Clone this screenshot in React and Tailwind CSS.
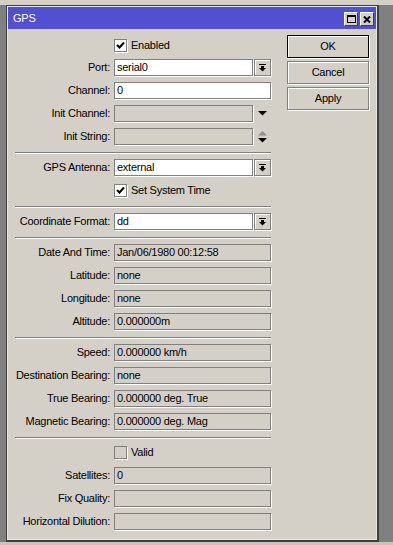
import React from "react";

// readonly / editable text box
const Field = ({ value = "", white = false, w = "w-[157px]" }) => (
  <div
    className={`${w} h-[17px] border border-[#808080] shadow-[1px_1px_0_#fff] px-[2px] leading-[15px] whitespace-nowrap overflow-hidden ${
      white ? "bg-white" : "bg-[#d4d0c8]"
    }`}
  >
    {value}
  </div>
);

const DropButton = () => (
  <div className="ml-px w-[17px] h-[17px] border border-[#808080] shadow-[1px_1px_0_#fff,inset_1px_1px_0_#fff] bg-[#d4d0c8] flex items-center justify-center">
    <svg width="7" height="8" viewBox="0 0 7 8">
      <rect x="0" y="0" width="7" height="1" fill="#000" />
      <rect x="2" y="2" width="3" height="2" fill="#000" />
      <polygon points="0,4 7,4 3.5,7.5" fill="#000" />
    </svg>
  </div>
);

const Row = ({ label, mt = "", children }) => (
  <div className={`flex items-center ${mt}`}>
    <div className="w-[96px] pr-px text-right whitespace-nowrap leading-[15px]">
      {label}:
    </div>
    <div className="ml-[3px] flex items-center">{children}</div>
  </div>
);

const Check = ({ label, checked, disabled, mt = "" }) => (
  <div className={`flex items-center h-[17px] ${mt}`}>
    <div className="w-[99px]" />
    <div
      className={`w-[13px] h-[13px] border border-[#808080] shadow-[1px_1px_0_#fff] flex items-center justify-center ${
        disabled ? "bg-[#d4d0c8]" : "bg-white"
      }`}
    >
      {checked && (
        <svg width="9" height="9" viewBox="0 0 9 9">
          <path d="M1 4 L3.5 6.5 L8 1.5" stroke="#000" strokeWidth="2" fill="none" />
        </svg>
      )}
    </div>
    <span className="ml-[4px] leading-[15px]">{label}</span>
  </div>
);

const Sep = ({ mt = "" }) => (
  <div className={`w-[256px] h-px bg-[#808080] shadow-[0_1px_0_#fff] ${mt}`} />
);

const Button = ({ children, primary, mt = "" }) => (
  <div
    className={`w-[82px] h-[23px] flex items-center justify-center shadow-[1px_1px_0_#fff,inset_1px_1px_0_#fff] ${
      primary ? "border border-black" : "border border-[#808080]"
    } ${mt}`}
  >
    {children}
  </div>
);

const TitleButton = ({ children }) => (
  <div className="w-[14px] h-[14px] bg-[#d4d0c8] border border-t-white border-l-white border-r-[#404040] border-b-[#404040] flex items-center justify-center">
    {children}
  </div>
);

export default function App() {
  return (
    <div className="w-[393px] h-[545px] bg-[#808080] flex flex-col overflow-hidden font-['Liberation_Sans',Arial,sans-serif] text-[11px] tracking-[-0.25px] text-black">
      <div className="h-[5px] bg-[#d4d0c8] shrink-0" />
      <div className="flex">
        <div className="w-[6px] shrink-0" />
        {/* window */}
        <div className="w-[373px] h-[537px] border-l border-t border-[#404040] border-r-2 border-b-2 bg-[#e8e6e0] p-px flex flex-col">
          <div className="h-[22px] bg-[#5050d0] flex items-center justify-between pl-[5px] pr-[2px]">
            <span className="text-white text-[11px]">GPS</span>
            <div className="flex gap-[2px] mt-[2px]">
              <TitleButton>
                <svg width="9" height="8" viewBox="0 0 9 8">
                  <rect x="0.5" y="0.5" width="8" height="7" stroke="#000" fill="none" />
                  <rect x="0" y="0" width="9" height="2" fill="#000" />
                </svg>
              </TitleButton>
              <TitleButton>
                <svg width="8" height="7" viewBox="0 0 8 7">
                  <path d="M1 0.5 L7 6.5 M7 0.5 L1 6.5" stroke="#000" strokeWidth="2" />
                </svg>
              </TitleButton>
            </div>
          </div>
          {/* body */}
          <div className="flex-1 bg-[#d4d0c8] flex items-start pl-[7px]">
            <div className="w-[256px] pt-[8px] flex flex-col">
              <Check label="Enabled" checked />
              <Row label="Port" mt="mt-[5px]">
                <Field value="serial0" white w="w-[139px]" />
                <DropButton />
              </Row>
              <Row label="Channel" mt="mt-[6px]">
                <Field value="0" white />
              </Row>
              <Row label="Init Channel" mt="mt-[6px]">
                <Field w="w-[139px]" />
                <div className="w-[18px] flex justify-center">
                  <svg width="9" height="5" viewBox="0 0 9 5">
                    <polygon points="0,0 9,0 4.5,4.5" fill="#000" />
                  </svg>
                </div>
              </Row>
              <Row label="Init String" mt="mt-[6px]">
                <Field w="w-[139px]" />
                <div className="w-[18px] flex flex-col items-center gap-[2px]">
                  <svg width="9" height="5" viewBox="0 0 9 5">
                    <polygon points="0,4.5 9,4.5 4.5,0" fill="#909090" />
                  </svg>
                  <svg width="9" height="5" viewBox="0 0 9 5">
                    <polygon points="0,0 9,0 4.5,4.5" fill="#000" />
                  </svg>
                </div>
              </Row>
              <Sep mt="mt-[7px]" />
              <Row label="GPS Antenna" mt="mt-[6px]">
                <Field value="external" white w="w-[139px]" />
                <DropButton />
              </Row>
              <Check label="Set System Time" checked mt="mt-[6px]" />
              <Sep mt="mt-[7px]" />
              <Row label="Coordinate Format" mt="mt-[6px]">
                <Field value="dd" white w="w-[139px]" />
                <DropButton />
              </Row>
              <Sep mt="mt-[7px]" />
              <Row label="Date And Time" mt="mt-[6px]">
                <Field value="Jan/06/1980 00:12:58" />
              </Row>
              <Row label="Latitude" mt="mt-[6px]">
                <Field value="none" />
              </Row>
              <Row label="Longitude" mt="mt-[6px]">
                <Field value="none" />
              </Row>
              <Row label="Altitude" mt="mt-[6px]">
                <Field value="0.000000m" />
              </Row>
              <Sep mt="mt-[7px]" />
              <Row label="Speed" mt="mt-[6px]">
                <Field value="0.000000 km/h" />
              </Row>
              <Row label="Destination Bearing" mt="mt-[6px]">
                <Field value="none" />
              </Row>
              <Row label="True Bearing" mt="mt-[6px]">
                <Field value="0.000000 deg. True" />
              </Row>
              <Row label="Magnetic Bearing" mt="mt-[6px]">
                <Field value="0.000000 deg. Mag" />
              </Row>
              <Sep mt="mt-[7px]" />
              <Check label="Valid" disabled mt="mt-[6px]" />
              <Row label="Satellites" mt="mt-[6px]">
                <Field value="0" />
              </Row>
              <Row label="Fix Quality" mt="mt-[6px]">
                <Field />
              </Row>
              <Row label="Horizontal Dilution" mt="mt-[6px]">
                <Field />
              </Row>
            </div>
            <div className="ml-[16px] pt-[6px] flex flex-col">
              <Button primary>OK</Button>
              <Button mt="mt-[3px]">Cancel</Button>
              <Button mt="mt-[3px]">Apply</Button>
            </div>
          </div>
        </div>
      </div>
      <div className="flex-1 bg-[#c8c4bc]" />
    </div>
  );
}
